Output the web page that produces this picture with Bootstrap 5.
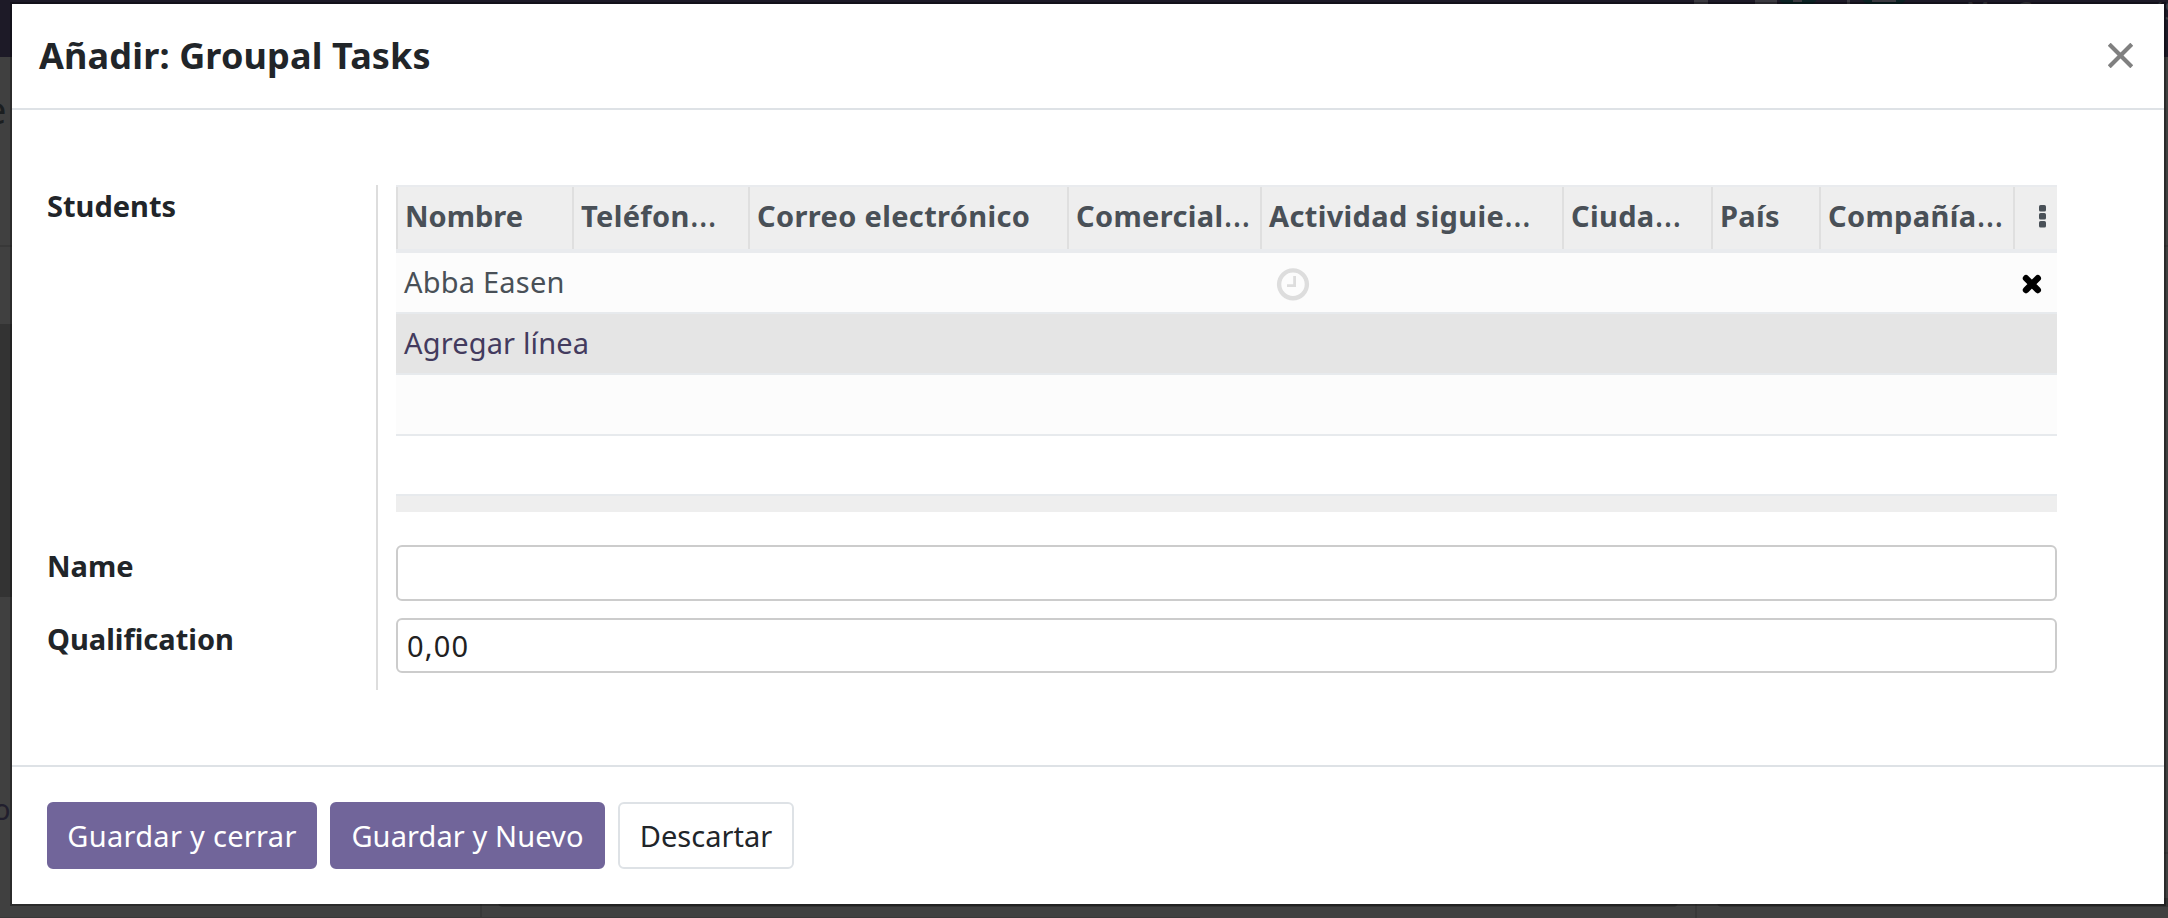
<!DOCTYPE html>
<html lang="es">
<head>
<meta charset="utf-8">
<meta name="viewport" content="width=device-width, initial-scale=1">
<title>Añadir: Groupal Tasks</title>
<link href="https://cdn.jsdelivr.net/npm/bootstrap@5.3.0/dist/css/bootstrap.min.css" rel="stylesheet">
<style>
  body { height: 918px; overflow: hidden; background: #404040; color: #212529;
    font: 400 29px/42px "Noto Sans", "Open Sans", sans-serif; letter-spacing: .2px; }

  /* dimmed page that shows around the dialog */
  .page-behind { inset: 0; overflow: hidden; }
  .page-behind > * { position: absolute; }
  .bar-top { left: 0; right: 0; top: 0; height: 57px; background: #1d1a27; }
  .company { left: 1966px; top: -9px; font-size: 26px; line-height: 38px; letter-spacing: 2px; color: #3f3f44; white-space: nowrap; }
  .pill { top: -18px; height: 24px; background: #0b2224; border-radius: 12px; }
  .nub { top: 0; height: 4px; background: #3b3a41; }
  .rule { height: 2px; left: 0; right: 0; background: #383838; }
  .vrule { top: 904px; height: 14px; width: 2px; background: #383838; }
  .block-grey { left: 0; width: 12px; top: 324px; height: 273px; background: #333; }
  .letter-e { left: -15px; top: 83px; font-size: 38px; line-height: 52px; color: #1b1e20; }
  .letter-o { left: -7px; top: 788px; color: #211e2d; }
  .field-edge { top: 898px; height: 9px; border: 2px solid #333; border-radius: 6px; background: #333; }

  .dialog { width: 2152px; height: 900px; margin: 4px 0 0 12px; background: #fff; box-shadow: 0 0 0 2px rgba(0,0,0,.32); }
  .dialog-head { height: 106px; padding: 25px 31px 25px 27px; border-bottom: 2px solid #dee2e6; }
  .dialog-head h4 { font-size: 36px; line-height: 54px; font-weight: 700; letter-spacing: .15px; }
  .dialog-head svg { margin-top: 14px; }
  .dialog-body { height: 655px; padding: 75px 0 75px 35px; }
  .dialog-foot { padding: 35px; gap: 13px; border-top: 2px solid #dee2e6; }

  .field-name { width: 331px; border-right: 2px solid #ddd; font-weight: 700; letter-spacing: 0; }
  .field-value { width: 1679px; padding-left: 18px; }
  .f-list { height: 360px; } .f-name { height: 73px; } .f-qual { height: 72px; }
  .box { height: 56px; padding: 0 9px; border: 2px solid #ccc; border-radius: 6px; font-size: 29px; color: #212121; letter-spacing: 1.2px; }
  .f-qual .box { height: 55px; }

  .list { table-layout: fixed; width: 1661px; border-collapse: separate; border-spacing: 0; color: #495057; }
  .list th { height: 68px; padding: 8px 0 12px 9px; background: #eee linear-gradient(#dfdfdf, #dfdfdf) 0 0 / 2px 63px no-repeat;
    border-top: 2px solid #e9ebee; border-bottom: 4px solid #e9ebee; font-weight: 700; letter-spacing: .35px; white-space: nowrap; line-height: 42px; }
  .list th i { font-style: normal; font-weight: 400; font-size: 34px; line-height: 0; letter-spacing: 0; }
  .list th:nth-child(1) { letter-spacing: 0; }
  .list td { height: 61px; padding: 8px 0 9px 8px; border-bottom: 2px solid #e7eaed; }
  .list .odd td { background: #fcfcfc; }
  .list .add td { background: #e5e5e5; }
  .list .add a { color: #433b5e; text-decoration: none; letter-spacing: .15px; }
  .list tfoot td { height: 18px; padding: 0; background: #eee; border-top: 2px solid #e7eaed; border-bottom: 0; }
  .list .last td { height: 58px; border-bottom: 0; }

  .btn { height: 67px; padding: 0; border-width: 2px; border-radius: 6px; font-size: 29px; line-height: 42px; }
  .btn-violet { background: #71659a; border-color: #71659a; color: #fff; }
  .btn-plain { background: #fff; border-color: #dee2e6; color: #212529; letter-spacing: 0; }
  .w-a { width: 270px; letter-spacing: .3px; } .w-b { width: 275px; letter-spacing: .1px; } .w-c { width: 176px; }
  svg { display: block; }
</style>
</head>
<body>
<div class="page-behind position-absolute" aria-hidden="true">
  <div class="bar-top"></div>
  <div class="nub" style="left:1694px;width:14px"></div>
  <div class="nub" style="left:1755px;width:22px"></div>
  <div class="pill" style="left:1778px;width:40px"></div>
  <div class="nub" style="left:1793px;width:9px;height:2px"></div>
  <div class="nub" style="left:1847px;width:3px"></div>
  <div class="pill" style="left:1861px;width:46px"></div>
  <div class="nub" style="left:1872px;width:24px;height:2px"></div>
  <div class="company">My Company (S</div>
  <div class="rule" style="top:245px"></div>
  <div class="block-grey"></div>
  <div class="letter-e">e</div>
  <div class="letter-o">o</div>
  <div class="field-edge" style="left:498px;width:1180px"></div>
  <div class="field-edge" style="left:1717px;width:480px"></div>
  <div class="vrule" style="left:480px"></div>
  <div class="vrule" style="left:1695px"></div>
  <div class="rule" style="top:852px;left:2164px"></div>
  <div class="rule" style="top:917px;width:1200px"></div>
</div>

<div class="dialog position-relative d-flex flex-column" role="dialog">
  <header class="dialog-head d-flex align-items-start justify-content-between">
    <h4 class="m-0">Añadir: Groupal Tasks</h4>
    <svg width="25" height="25" viewBox="0 0 25 25" stroke="#808080" stroke-width="4.2" aria-label="Cerrar"><path d="M1.2 1.2 23.8 23.8M23.8 1.2 1.2 23.8"/></svg>
  </header>

  <main class="dialog-body">
    <div class="d-flex f-list">
      <div class="field-name">Students</div>
      <div class="field-value">
        <table class="list">
          <colgroup>
            <col style="width:176px"><col style="width:176px"><col style="width:319px"><col style="width:193px"><col style="width:302px"><col style="width:149px"><col style="width:108px"><col style="width:194px"><col style="width:44px">
          </colgroup>
          <thead>
            <tr>
              <th>Nombre</th><th>Teléfon<i>…</i></th><th>Correo electrónico</th><th>Comercial<i>…</i></th><th>Actividad siguie<i>…</i></th><th>Ciuda<i>…</i></th><th>País</th><th>Compañía<i>…</i></th>
              <th><svg class="ms-3" width="10" height="24" viewBox="0 0 10 24" fill="#495057"><rect x="1" y="1" width="7" height="6.5" rx="1.6"/><rect x="1" y="9" width="7" height="6.5" rx="1.6"/><rect x="1" y="17" width="7" height="6.5" rx="1.6"/></svg></th>
            </tr>
          </thead>
          <tbody>
            <tr class="odd">
              <td colspan="4">Abba Easen</td>
              <td colspan="4"><svg class="ms-2 mt-1" width="34" height="34" viewBox="0 0 34 34" fill="none" stroke="#ddd"><circle cx="17" cy="17.3" r="13.9" stroke-width="4.4"/><path d="M18.6 9v9.7H11" stroke-width="2.8"/></svg></td>
              <td><svg class="mt-1" width="21" height="21" viewBox="0 0 21 21" stroke="#000" stroke-width="6.4" stroke-linecap="round"><path d="M5 4.2 16.8 16M16.8 4.2 5 16"/></svg></td>
            </tr>
            <tr class="add"><td colspan="9"><a href="#">Agregar línea</a></td></tr>
            <tr class="odd"><td colspan="9"></td></tr>
            <tr class="last"><td colspan="9"></td></tr>
          </tbody>
          <tfoot><tr><td colspan="9"></td></tr></tfoot>
        </table>
      </div>
    </div>
    <div class="d-flex f-name">
      <label class="field-name" for="name">Name</label>
      <div class="field-value"><input id="name" class="box form-control" type="text"></div>
    </div>
    <div class="d-flex f-qual">
      <label class="field-name" for="qual">Qualification</label>
      <div class="field-value"><input id="qual" class="box form-control" type="text" value="0,00"></div>
    </div>
  </main>

  <footer class="dialog-foot d-flex">
    <button class="btn btn-violet w-a">Guardar y cerrar</button>
    <button class="btn btn-violet w-b">Guardar y Nuevo</button>
    <button class="btn btn-plain w-c">Descartar</button>
  </footer>
</div>
<script src="https://cdn.jsdelivr.net/npm/bootstrap@5.3.0/dist/js/bootstrap.bundle.min.js"></script>
</body>
</html>
